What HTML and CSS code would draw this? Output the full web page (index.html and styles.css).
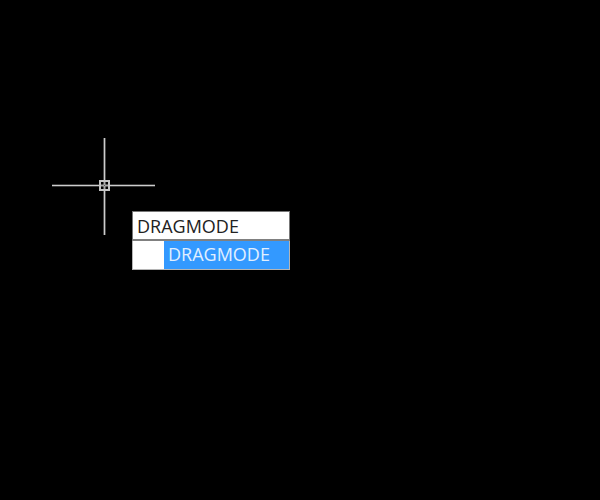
FILE: index.html
```html
<!DOCTYPE html>
<html lang="en">
<head>
    <meta charset="UTF-8">
    <title>Dynamic Input</title>
    <link rel="stylesheet" href="styles.css">
</head>
<body>
    <main class="canvas">
        <svg class="crosshair" width="104" height="98" viewBox="0 0 104 98" aria-hidden="true">
            <path class="outline" d="M0 48.500H103M52.500 1V98"/>
            <path class="line" d="M0 48.500H103M52.500 1V98"/>
            <rect class="pickbox" x="48" y="44" width="9" height="9"/>
            <path class="center" d="M52.500 45V52M49 48.500H56"/>
            <rect class="hole" x="52" y="48" width="1" height="1"/>
        </svg>

        <form class="command">
            <input class="command-input" type="text" value="DRAGMODE" aria-label="Command" autocomplete="off" spellcheck="false">
            <div class="suggestions">
                <button class="suggestion" type="button">DRAGMODE</button>
            </div>
        </form>
    </main>
</body>
</html>
```

FILE: styles.css
```css
body {
    margin: 0;
    background-color: #000;
    font-family: "Open Sans", "Noto Sans", sans-serif;
}

.canvas {
    position: relative;
    min-height: 100vh;
    overflow: hidden;
}

.crosshair {
    position: absolute;
    left: 52px;
    top: 137px;
}

.crosshair path,
.crosshair rect {
    fill: none;
}

.outline {
    stroke: #777;
    stroke-width: 2;
}

.line {
    stroke: #ccc;
    stroke-width: 1.2;
}

.crosshair .pickbox {
    fill: #000;
    stroke: #c4c4c4;
    stroke-width: 2;
}

.center {
    stroke: #a8a8a8;
    stroke-width: 2;
}

.crosshair .hole {
    fill: #555;
}

.command {
    position: absolute;
    left: 132px;
    top: 211px;
    width: 158px;
}

.command-input,
.suggestion {
    display: block;
    box-sizing: border-box;
    width: 100%;
    margin: 0;
    border: none;
    border-radius: 0;
    font-family: inherit;
    font-size: 18px;
    line-height: 26px;
    text-align: left;
}

.command-input {
    height: 30px;
    padding: 0 4px;
    border: 1px solid #777;
    border-bottom: 2px solid #808080;
    background-color: #fff;
    color: #222;
    outline: none;
}

.suggestions {
    padding-left: 31px;
    border: 1px solid #b5b5b5;
    border-top: none;
    background-color: #fff;
}

.suggestion {
    height: 28px;
    padding: 0 4px 2px;
    background-color: #3399ff;
    color: #e0efff;
    cursor: pointer;
}
```
